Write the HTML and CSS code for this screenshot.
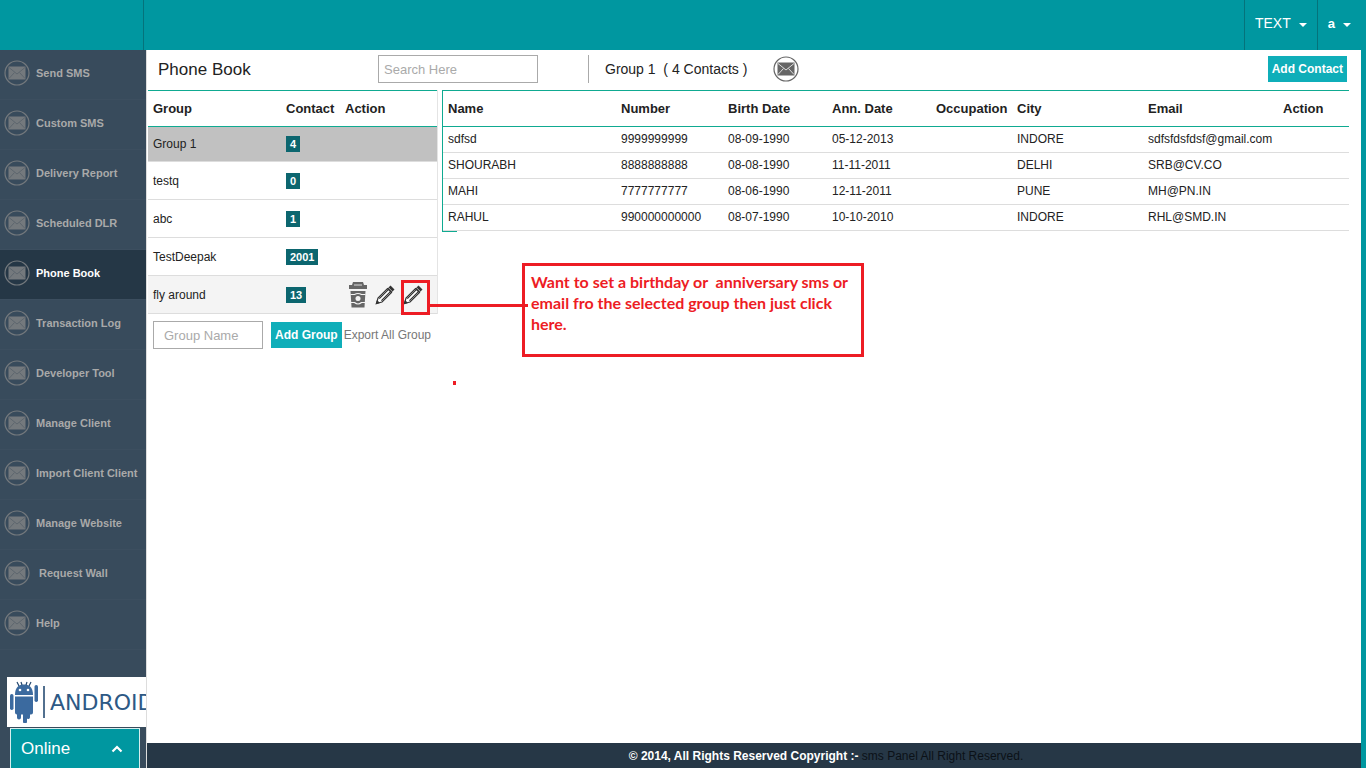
FILE: index.html
```html
<!DOCTYPE html>
<html lang="en">
<head>
<meta charset="utf-8">
<title>Phone Book</title>
<link rel="stylesheet" href="styles.css">
</head>
<body>
<svg class="sprite" aria-hidden="true">
  <symbol id="mail" viewBox="0 0 26 26">
    <circle cx="13" cy="13" r="12" fill="none" stroke="currentColor" stroke-width="1.2"/>
    <rect x="4.500" y="6.500" width="17" height="13" fill="currentColor"/>
    <path d="M5 7.500l8 6.500 8-6.500M5 18.500l5.500-6M21 18.500l-5.500-6" fill="none" stroke="var(--fold)" stroke-width="1"/>
  </symbol>
  <symbol id="pencil" viewBox="0 0 20 20">
    <path d="M1.500 18.500l1.500-5.500L12.500 3.500l4 4L7 17z" fill="#fff" stroke="#333" stroke-width="1.200"/>
    <path d="M4.300 13.600l9-9M6.400 15.700l9-9" stroke="#333" stroke-width="1.200"/>
    <path d="M12.500 3.500l3-3 4 4-3 3z" fill="#333"/>
    <path d="M13.300 2.500l4.200 4.200" stroke="#ccc" stroke-width=".8"/>
    <path d="M.5 19.500l1.500-4.500 3 3z" fill="#333"/>
  </symbol>
</svg>
<div class="page">
  <header class="topbar">
    <div class="brand"></div>
    <nav class="account">
      <button class="account-item" type="button">TEXT<span class="caret"></span></button>
      <button class="account-item user" type="button">a<span class="caret"></span></button>
    </nav>
  </header>
  <aside class="sidebar">
    <nav class="menu">
      <a href="#"><svg><use href="#mail"/></svg>Send SMS</a>
      <a href="#"><svg><use href="#mail"/></svg>Custom SMS</a>
      <a href="#"><svg><use href="#mail"/></svg>Delivery Report</a>
      <a href="#"><svg><use href="#mail"/></svg>Scheduled DLR</a>
      <a href="#" class="active"><svg><use href="#mail"/></svg>Phone Book</a>
      <a href="#"><svg><use href="#mail"/></svg>Transaction Log</a>
      <a href="#"><svg><use href="#mail"/></svg>Developer Tool</a>
      <a href="#"><svg><use href="#mail"/></svg>Manage Client</a>
      <a href="#"><svg><use href="#mail"/></svg>Import Client Client</a>
      <a href="#"><svg><use href="#mail"/></svg>Manage Website</a>
      <a href="#"><svg><use href="#mail"/></svg>&nbsp;Request Wall</a>
      <a href="#"><svg><use href="#mail"/></svg>Help</a>
    </nav>
    <div class="android">
      <svg class="robot" viewBox="0 0 28 42" aria-hidden="true">
        <g fill="#3b6a9f">
          <path d="M5 14C5 6 9 3.500 14 3.500S23 6 23 14z"/>
          <path d="M5 15.500h18v16a2 2 0 0 1-2 2h-1v3a2 2 0 0 1-3 1v3a2 2 0 0 1-4 0v-7h-2v3a2 2 0 0 1-4 0v-3a2 2 0 0 1-2-2z"/>
          <rect x="0" y="13" width="3.500" height="16" rx="1.700"/>
          <rect x="24.500" y="4" width="3.500" height="17" rx="1.700"/>
        </g>
        <path d="M9 5L7 1M19 5l2-4M12 4l-1-3M16 4l1-3" stroke="#24486f" stroke-width="1.200"/>
        <circle cx="10" cy="9" r="1.300" fill="#fff"/><circle cx="18" cy="9" r="1.300" fill="#fff"/>
      </svg>
      <span class="rule"></span>
      <span class="wordmark">ANDROID</span>
    </div>
    <button class="online" type="button">Online
      <svg viewBox="0 0 12 8" aria-hidden="true"><path d="M1.500 6.500L6 2l4.500 4.500" fill="none" stroke="#fff" stroke-width="2.200"/></svg>
    </button>
  </aside>
  <main class="content">
    <div class="toolbar">
      <h1>Phone Book</h1>
      <input class="search" type="text" placeholder="Search Here" aria-label="Search Here">
      <div class="summary"><span>Group 1&nbsp; ( 4 Contacts )</span><svg><use href="#mail"/></svg></div>
      <button class="btn" type="button">Add Contact</button>
    </div>
    <div class="panels">
      <section class="groups">
        <table>
          <thead><tr><th class="g-name">Group</th><th class="g-count">Contact</th><th>Action</th></tr></thead>
          <tbody>
            <tr class="selected"><td>Group 1</td><td><span class="badge">4</span></td><td></td></tr>
            <tr><td>testq</td><td><span class="badge">0</span></td><td></td></tr>
            <tr><td>abc</td><td><span class="badge">1</span></td><td></td></tr>
            <tr><td>TestDeepak</td><td><span class="badge">2001</span></td><td></td></tr>
            <tr class="hover"><td>fly around</td><td><span class="badge">13</span></td><td>
              <div class="actions">
                <button type="button" aria-label="Delete"><svg class="trash" viewBox="0 0 18 26"><g fill="#666"><path d="M4 0h10l1 3h3v4H0V3h3z"/><path d="M1.500 9h15L15.500 25.500h-13z"/></g><path d="M5 3h8" stroke="#ddd"/><path d="M1.500 12.500h4q3.500-2 7 0h4M2 20.500h3.500q3.500 3 7 0H16" fill="none" stroke="#f4f4f4" stroke-width="1.200"/><circle cx="9" cy="16.500" r="2.500" fill="#f4f4f4"/></svg></button>
                <button type="button" aria-label="Edit"><svg><use href="#pencil"/></svg></button>
                <button type="button" aria-label="Set birthday or anniversary message"><svg><use href="#pencil"/></svg></button>
              </div></td></tr>
          </tbody>
        </table>
        <form class="add-group">
          <input type="text" placeholder="Group Name" aria-label="Group Name">
          <button class="btn" type="button">Add Group</button>
          <a href="#">Export All Group</a>
        </form>
      </section>
      <section class="contacts">
        <table>
          <thead><tr><th class="c-name">Name</th><th class="c-number">Number</th><th class="c-date">Birth Date</th><th class="c-date">Ann. Date</th><th class="c-job">Occupation</th><th class="c-city">City</th><th class="c-email">Email</th><th>Action</th></tr></thead>
          <tbody>
            <tr><td>sdfsd</td><td>9999999999</td><td>08-09-1990</td><td>05-12-2013</td><td></td><td>INDORE</td><td>sdfsfdsfdsf@gmail.com</td><td></td></tr>
            <tr><td>SHOURABH</td><td>8888888888</td><td>08-08-1990</td><td>11-11-2011</td><td></td><td>DELHI</td><td>SRB@CV.CO</td><td></td></tr>
            <tr><td>MAHI</td><td>7777777777</td><td>08-06-1990</td><td>12-11-2011</td><td></td><td>PUNE</td><td>MH@PN.IN</td><td></td></tr>
            <tr><td>RAHUL</td><td>990000000000</td><td>08-07-1990</td><td>10-10-2010</td><td></td><td>INDORE</td><td>RHL@SMD.IN</td><td></td></tr>
          </tbody>
        </table>
      </section>
    </div>
    <div class="marker"></div>
    <div class="connector"></div>
    <div class="callout">Want to set a birthday or&nbsp; anniversary sms or email fro the selected group then just click here.</div>
    <div class="speck"></div>
  </main>
  <footer class="footer"><p><b>© 2014, All Rights Reserved Copyright :-</b> <span>sms Panel All Right Reserved.</span></p></footer>
</div>
</body>
</html>
```
FILE: styles.css
```css
* { box-sizing: border-box; }
body {
  margin: 0;
  background: #0097a0;
  color: #222;
  font: 12px "Liberation Sans", Arial, sans-serif;
}
button, input { font: inherit; margin: 0; }
button { cursor: pointer; }
a { text-decoration: none; }
.sprite { position: absolute; width: 0; height: 0; }

.page {
  display: grid;
  grid-template: 50px 1fr 25px / 147px 1fr;
  min-height: 100vh;
}

.topbar {
  grid-column: 1 / -1;
  display: flex;
  justify-content: space-between;
  background: #0097a0;
}
.brand { width: 144px; border-right: 1px solid #05737b; }
.account { display: flex; }
.account-item {
  display: flex;
  align-items: center;
  gap: 8px;
  padding: 0 10px 4px;
  border: 0;
  border-left: 1px solid #05737b;
  background: none;
  color: #fff;
  font-size: 14px;
}
.account-item.user { font-weight: bold; font-size: 13px; padding-right: 15px; }
.caret {
  margin-top: 4px;
  border: 4px solid transparent;
  border-top-color: #fff;
  border-bottom: 0;
}

.sidebar {
  grid-row: 2 / 4;
  display: flex;
  flex-direction: column;
  background: #384b5c;
  border-right: 1px solid #ddd;
  overflow: hidden;
}
.menu a {
  display: flex;
  align-items: center;
  gap: 6px;
  height: 50px;
  padding: 0 0 4px 4px;
  border-bottom: 1px solid #3c4e5f;
  color: #a9a9a9;
  font-size: 11px;
  font-weight: bold;
  white-space: nowrap;
}
.menu svg { width: 26px; height: 26px; flex: none; color: #74797d; --fold: #5d666e; }
.menu .active { background: #253746; color: #fff; }
.android {
  display: flex;
  align-items: center;
  gap: 5px;
  height: 50px;
  margin: auto 0 1px 7px;
  padding-left: 3px;
  background: #fff;
  overflow: hidden;
}
.robot { width: 28px; height: 42px; flex: none; }
.rule { width: 2px; height: 32px; flex: none; background: #52708f; }
.wordmark { color: #2d5985; font: 22px "DejaVu Sans", sans-serif; }
.online {
  display: flex;
  align-items: center;
  justify-content: space-between;
  height: 40px;
  margin: 0 6px 0 10px;
  padding: 0 16px 0 10px;
  border: 1px solid #d6eeee;
  border-bottom: 0;
  background: #0097a0;
  color: #fff;
  font-size: 17px;
}
.online svg { width: 12px; height: 8px; }

.content {
  position: relative;
  margin-right: 5px;
  padding: 0 12px 0 1px;
  background: #fff;
}
.toolbar { display: flex; align-items: center; height: 40px; padding-bottom: 2px; }
h1 { width: 230px; margin: 0; padding: 2px 0 0 10px; font-size: 17px; font-weight: normal; }
.search {
  width: 160px;
  height: 28px;
  padding: 0 5px;
  border: 1px solid #aaa;
  font-size: 13px;
}
::placeholder { color: #aaa; opacity: 1; }
.summary {
  display: flex;
  align-items: center;
  gap: 26px;
  height: 28px;
  margin: 0 auto 0 50px;
  padding-left: 16px;
  border-left: 1px solid #aaa;
  font-size: 14px;
}
.summary svg { width: 26px; height: 26px; color: #666; --fold: #ddd; }
.btn {
  height: 26px;
  padding: 0 4px;
  border: 0;
  background: #0faeb9;
  color: #fff;
  font-weight: bold;
  white-space: nowrap;
}
.toolbar .btn { margin-right: 2px; }

.panels { display: flex; align-items: flex-start; gap: 4px; }
table { width: 100%; border-collapse: separate; border-spacing: 0; table-layout: fixed; }
th, td { padding: 0 0 0 5px; text-align: left; white-space: nowrap; }
th {
  height: 37px;
  border-top: 1px solid #0faa91;
  border-bottom: 1px solid #0faa91;
  font-size: 13px;
  color: #222;
}
td { border-bottom: 1px solid #ddd; }

.groups { width: 290px; flex: none; }
.groups table { border-right: 1px solid #e4e4e4; }
.g-name { width: 133px; }
.g-count { width: 59px; }
.groups td { height: 38px; }
.groups .selected td { height: 35px; background: #c1c1c1; }
.groups .hover td { background: #f4f4f4; }
.badge {
  display: inline-block;
  padding: 0 4px;
  background: #0c666f;
  color: #fff;
  font-size: 11px;
  font-weight: bold;
  line-height: 16px;
}
.actions { display: flex; align-items: center; gap: 8px; padding-left: 4px; }
.actions button { display: flex; padding: 0; border: 0; background: none; }
.actions svg { width: 20px; height: 20px; }
.actions .trash { width: 18px; height: 26px; }
.add-group { display: flex; align-items: center; padding: 7px 0 0 5px; }
.add-group input {
  width: 110px;
  height: 28px;
  margin-right: 8px;
  padding: 0 10px;
  border: 1px solid #aaa;
  font-size: 13px;
}
.add-group a { margin-left: 2px; color: #777; white-space: nowrap; }

.contacts { flex: 1; border-left: 1px solid #0faa91; }
.contacts::after {
  content: "";
  display: block;
  width: 14px;
  border-bottom: 1px solid #0faa91;
}
.contacts td { height: 26px; padding-bottom: 2px; }
.c-name { width: 173px; }
.c-number { width: 107px; }
.c-date { width: 104px; }
.c-job { width: 81px; }
.c-city { width: 131px; }
.c-email { width: 135px; }

/* Help annotation drawn over the page */
.marker, .callout, .connector, .speck { position: absolute; }
.marker { left: 254px; top: 230px; width: 29px; height: 35px; border: 3px solid #ed1c24; }
.connector { left: 283px; top: 254px; width: 98px; height: 3px; background: #ed1c24; }
.callout {
  left: 375px;
  top: 213px;
  width: 342px;
  height: 94px;
  padding: 5px 6px;
  border: 3px solid #ed1c24;
  color: #ed1c24;
  font: bold 16px/21px Lato, sans-serif;
}
.speck { left: 306px; top: 331px; width: 3px; height: 4px; background: #ed1c24; }

.footer {
  margin-right: 5px;
  background: #263746;
}
.footer p { margin: 0; padding-left: 144px; line-height: 27px; text-align: center; }
.footer b { color: #fff; }
.footer span { color: #0b1117; }
```
